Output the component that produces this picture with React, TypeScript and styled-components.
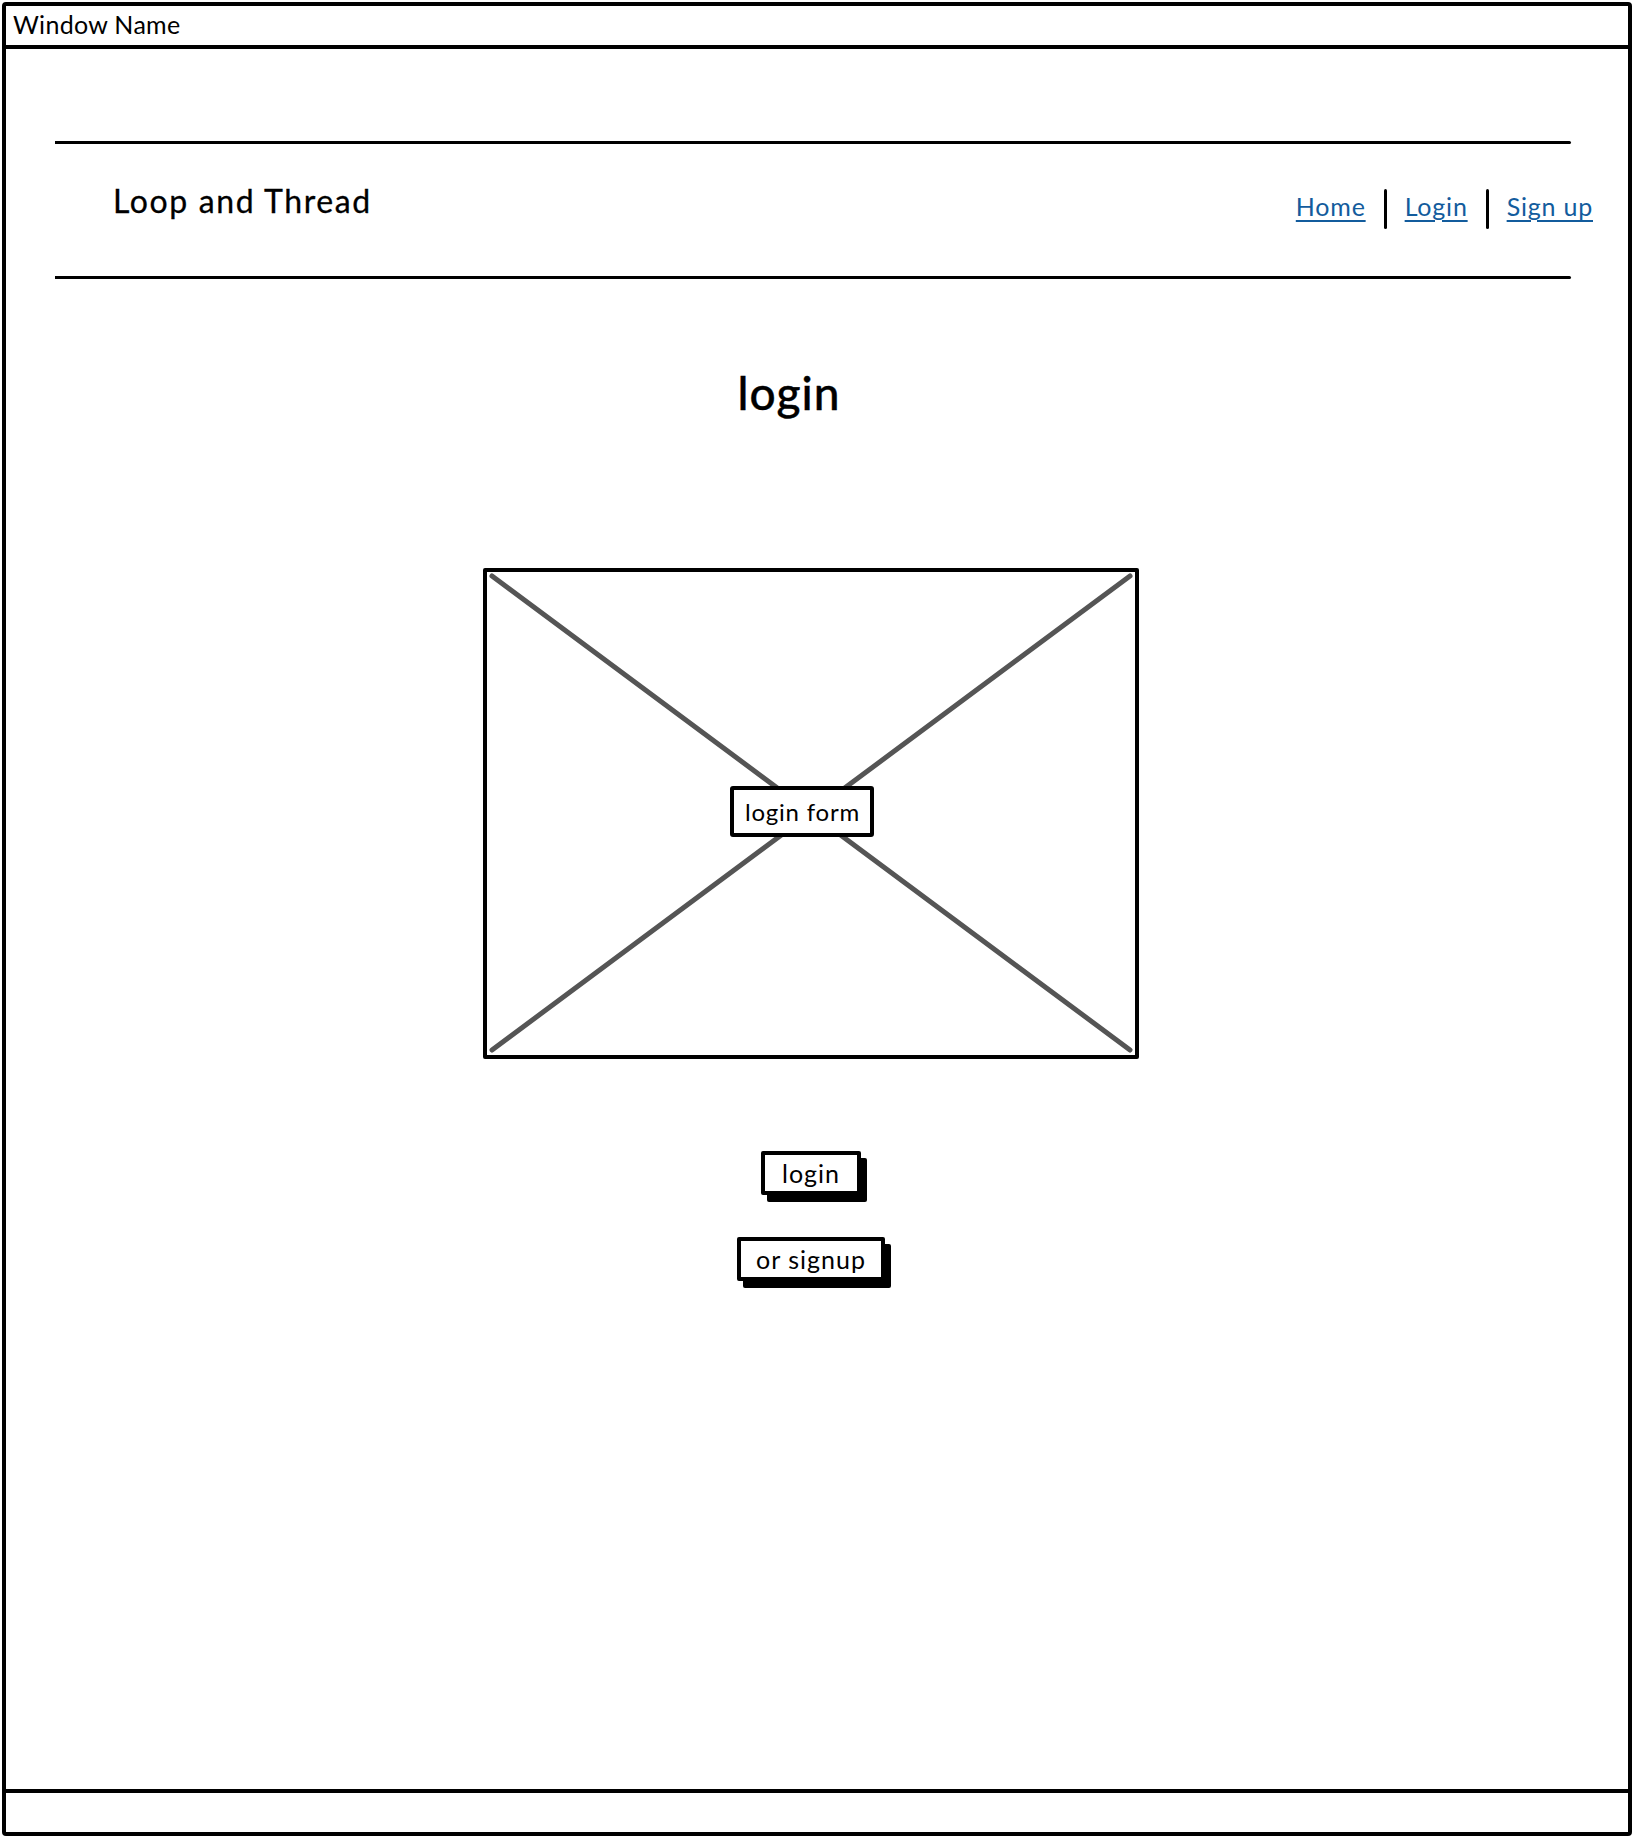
import React from 'react';
import styled, { createGlobalStyle } from 'styled-components';

const GlobalStyle = createGlobalStyle`
  html, body {
    margin: 0;
    padding: 0;
    background: #ffffff;
  }
  * {
    box-sizing: border-box;
  }
  body {
    font-family: 'Lato', 'Open Sans', sans-serif;
    color: #000000;
  }
`;

const Window = styled.div`
  margin: 2px;
  width: 1630px;
  height: 1834px;
  border: 4px solid #000;
  border-radius: 4px;
  display: flex;
  flex-direction: column;
  overflow: hidden;
`;

const TitleBar = styled.div`
  height: 43px;
  border-bottom: 4px solid #000;
  padding-left: 7px;
  padding-bottom: 3px;
  display: flex;
  align-items: center;
  font-size: 25px;
  letter-spacing: 0.3px;
  white-space: nowrap;
`;

const Body = styled.div`
  flex: 1;
  display: flex;
  flex-direction: column;
  padding-top: 92px;
`;

const Rule = styled.div`
  margin-left: 49px;
  width: 1516px;
  height: 3px;
  background: #000;
  border-radius: 0 2px 2px 0;
`;

const HeaderRow = styled.div`
  height: 132px;
  display: flex;
  align-items: center;
  justify-content: space-between;
  padding-left: 107px;
  padding-right: 35px;
`;

const Brand = styled.div`
  font-size: 32px;
  letter-spacing: 1.6px;
  padding-bottom: 20px;
  -webkit-text-stroke: 0.3px #000;
`;

const Nav = styled.nav`
  display: flex;
  align-items: center;
  gap: 18px;
  padding-bottom: 8px;
`;

const NavLink = styled.a`
  font-size: 25px;
  letter-spacing: 0.8px;
  color: #135c9d;
  text-decoration: underline;
  text-underline-offset: 4px;
  text-decoration-thickness: 2px;
  cursor: pointer;
`;

const NavSep = styled.span`
  width: 3px;
  height: 40px;
  margin-top: 6px;
  background: #000;
  border-radius: 2px;
`;

const Main = styled.main`
  display: flex;
  flex-direction: column;
  align-items: center;
  padding-right: 12px;
`;

const Heading = styled.h1`
  margin: 84px 44px 0 0;
  font-size: 46px;
  font-weight: 500;
  letter-spacing: 1px;
  line-height: 60px;
  -webkit-text-stroke: 0.4px #000;
`;

const Placeholder = styled.div`
  margin-top: 145px;
  width: 656px;
  height: 491px;
  border: 4px solid #000;
  border-radius: 2px;
  display: grid;
  place-items: center;
  & > * {
    grid-area: 1 / 1;
  }
`;

const Cross = styled.svg`
  width: 648px;
  height: 483px;
`;

const Label = styled.div`
  margin: 0 18px 4px 0;
  padding: 0 10px 0 11px;
  height: 51px;
  border: 4px solid #000;
  border-radius: 3px;
  background: #fff;
  font-size: 24px;
  letter-spacing: 0.8px;
  display: flex;
  align-items: center;
  z-index: 1;
`;

const Actions = styled.div`
  margin-top: 92px;
  display: flex;
  flex-direction: column;
  align-items: center;
  gap: 42px;
`;

const Button = styled.button<{ wide?: boolean }>`
  height: 44px;
  padding: 0 ${p => (p.wide ? '15px' : '17px')};
  border: 4px solid #000;
  border-radius: 2px;
  background: #fff;
  box-shadow: 6px 7px 0 #000;
  font-family: 'Lato', 'Open Sans', sans-serif;
  font-size: 25px;
  letter-spacing: 1px;
  color: #000;
  cursor: pointer;
`;

const Spacer = styled.div`
  flex: 1;
`;

const Footer = styled.div`
  height: 43px;
  border-top: 4px solid #000;
`;

export default function App() {
  return (
    <>
      <GlobalStyle />
      <Window>
        <TitleBar>Window Name</TitleBar>
        <Body>
          <Rule />
          <HeaderRow>
            <Brand>Loop and Thread</Brand>
            <Nav>
              <NavLink>Home</NavLink>
              <NavSep />
              <NavLink>Login</NavLink>
              <NavSep />
              <NavLink>Sign up</NavLink>
            </Nav>
          </HeaderRow>
          <Rule />
          <Main>
            <Heading>login</Heading>
            <Placeholder>
              <Cross viewBox="0 0 648 483">
                <line x1="5" y1="4" x2="643" y2="478" stroke="#555" strokeWidth="5" strokeLinecap="round" />
                <line x1="643" y1="4" x2="5" y2="478" stroke="#555" strokeWidth="5" strokeLinecap="round" />
              </Cross>
              <Label>login form</Label>
            </Placeholder>
            <Actions>
              <Button>login</Button>
              <Button wide>or signup</Button>
            </Actions>
          </Main>
          <Spacer />
        </Body>
        <Footer />
      </Window>
    </>
  );
}
